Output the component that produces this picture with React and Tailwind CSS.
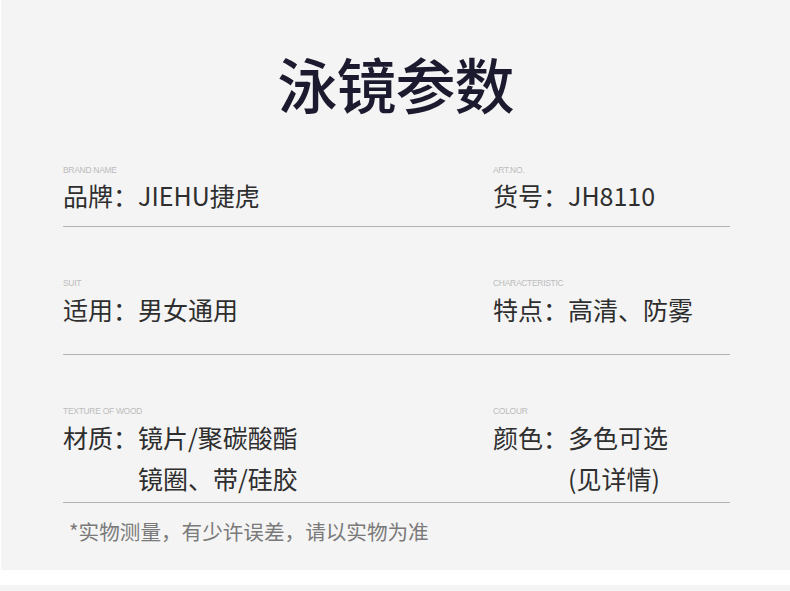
import React from 'react';

const cjk = { fontFamily: '"Noto Sans CJK SC", "Noto Sans", sans-serif' };

const Label = ({ children }) => (
    <div className="text-[8.5px] leading-[10px] text-[#bcbcbc] uppercase tracking-[-0.3px]" style={{ fontFamily: '"Liberation Sans", Arial, sans-serif' }}>
        {children}
    </div>
);

const Row = ({ left, right, labelGap, bodyClass, bottomGap }) => (
    <div className={`grid grid-cols-[430px_1fr] border-b border-[#b3b3b3] ${bottomGap}`}>
        {[left, right].map((col, i) => (
            <div key={i}>
                <Label>{col.label}</Label>
                <div className={`text-[25px] text-[#2e2e2e] ${labelGap} ${bodyClass}`}>
                    {col.lines.map((line, j) => (
                        <div key={j} className={j > 0 ? 'pl-[75px]' : ''}>{line}</div>
                    ))}
                </div>
            </div>
        ))}
    </div>
);

export default function App() {
    return (
        <div className="w-[790px] h-[591px] bg-white overflow-hidden" style={cjk}>
            <div className="h-[570px] bg-[#f4f4f4] ml-[1px]">
                {/* 标题 */}
                <h1 className="pt-[53px] text-center text-[60px] leading-[60px] font-medium text-[#1c1a2e] tracking-[-1px]">
                    泳镜参数
                </h1>

                <div className="ml-[62px] w-[667px]">
                    <div className="mt-[52px]">
                        <Row
                            left={{ label: 'Brand name', lines: ['品牌：JIEHU捷虎'] }}
                            right={{ label: 'Art.no.', lines: ['货号：JH8110'] }}
                            labelGap="mt-[5px]"
                            bodyClass="leading-[30px]"
                            bottomGap="pb-[16px]"
                        />
                    </div>

                    <div className="mt-[51px]">
                        <Row
                            left={{ label: 'Suit', lines: ['适用：男女通用'] }}
                            right={{ label: 'Characteristic', lines: ['特点：高清、防雾'] }}
                            labelGap="mt-[6px]"
                            bodyClass="leading-[30px]"
                            bottomGap="pb-[30px]"
                        />
                    </div>

                    <div className="mt-[51px]">
                        <Row
                            left={{ label: 'Texture of wood', lines: ['材质：镜片/聚碳酸酯', '镜圈、带/硅胶'] }}
                            right={{ label: 'Colour', lines: ['颜色：多色可选', '(见详情)'] }}
                            labelGap="mt-[1px]"
                            bodyClass="leading-[41px]"
                            bottomGap="pb-[3px]"
                        />
                    </div>

                    {/* 备注 */}
                    <p className="mt-[16px] ml-[6px] text-[20.6px] leading-[24px] text-[#7a7a7a]">
                        *实物测量，有少许误差，请以实物为准
                    </p>
                </div>
            </div>
            <div className="h-[15px] bg-white" />
            <div className="h-[6px] bg-[#f4f4f4]" />
        </div>
    );
}
